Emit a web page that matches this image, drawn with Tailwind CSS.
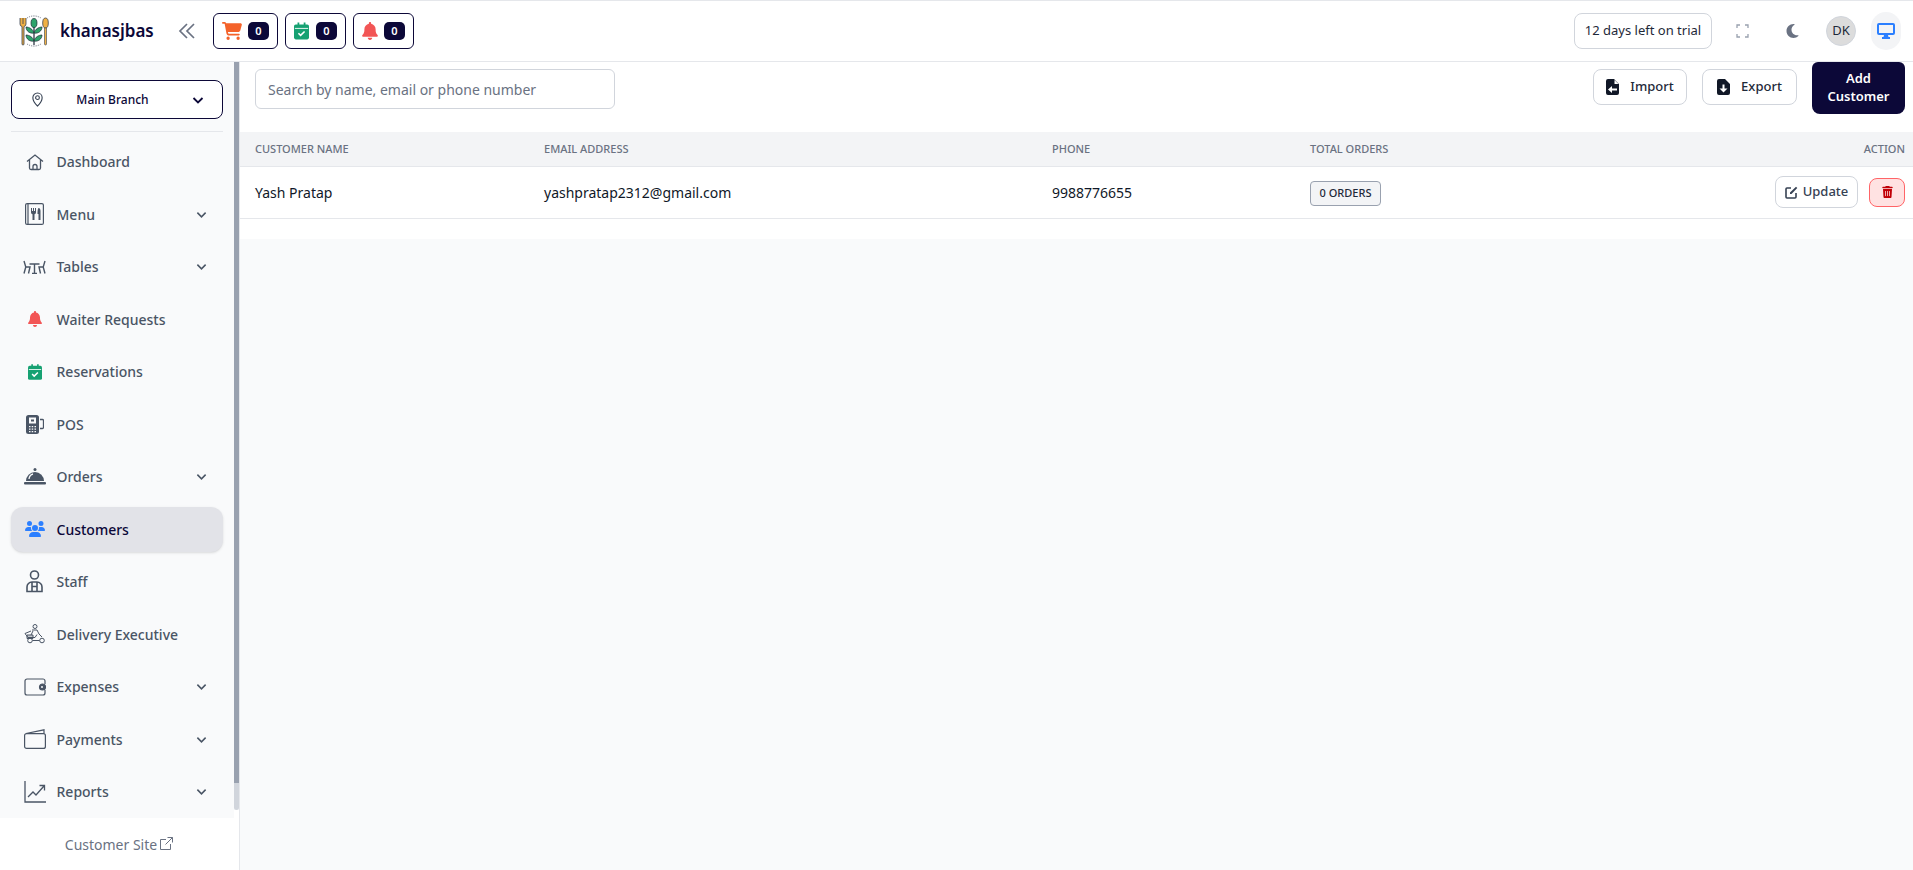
<!DOCTYPE html>
<html lang="en">
<head>
    <meta charset="UTF-8">
    <meta name="viewport" content="width=device-width, initial-scale=1.0">
    <title>Customers</title>
    <script src="https://cdn.jsdelivr.net/npm/@tailwindcss/browser@4"></script>
</head>
<body class="bg-white font-['Noto_Sans',sans-serif] text-gray-900 overflow-hidden">
<div class="h-[870px] flex flex-col">
    <!-- top bar -->
    <header class="h-[62px] shrink-0 bg-white border-t border-t-gray-200 border-b border-b-gray-200 flex items-center pl-[18px] pr-[12px]">
        <svg class="w-[32px] h-[32px] shrink-0" viewBox="0 0 32 32">
            <path d="M9 3a13 13 0 0 1 14 0M9 29a13 13 0 0 0 14 0" fill="none" stroke="#6b7280" stroke-width="0.9" stroke-dasharray="1.200 1"/>
            <path d="M2 3v6a2.500 2.500 0 0 0 2 2.500V29a1 1 0 0 0 2 0V11.500A2.500 2.500 0 0 0 8 9V3M5 3v6" fill="#f0b044" stroke="#374151" stroke-width="0.8"/>
            <ellipse cx="27.500" cy="8" rx="2.800" ry="5" fill="#f0b044" stroke="#374151" stroke-width="0.8"/>
            <path d="M26.500 13h2v16a1 1 0 0 1-2 0z" fill="#f0b044" stroke="#374151" stroke-width="0.6"/>
            <path d="M16 7v23" stroke="#1f2937" stroke-width="1.200"/>
            <ellipse cx="16" cy="8" rx="3" ry="4.500" fill="#2ea36b" stroke="#1f2937" stroke-width="0.7"/>
            <path d="M16 18c-1-4-5-6-8-6 0 4 4 7 8 6zM16 18c1-4 5-6 8-6 0 4-4 7-8 6zM16 26c-1-4-5-6-8-6 0 4 4 7 8 6zM16 26c1-4 5-6 8-6 0 4-4 7-8 6z" fill="#2ea36b" stroke="#1f2937" stroke-width="0.7"/>
        </svg>
        <span class="ml-[10px] text-[17px] font-semibold text-[#0c0838] w-[96px]">khanasjbas</span>
        <svg class="ml-[22px] w-[18px] h-[18px] text-gray-500" viewBox="0 0 18 18" fill="none" stroke="currentColor" stroke-width="1.700"><path d="M9 2 2 9l7 7M16 2 9 9l7 7"/></svg>
        <div class="ml-[17px] flex gap-[7px]">
            <div class="w-[65px] h-[36px] rounded-md border border-[#0c0838] flex items-center pl-[8px] gap-[6px]">
                <svg class="w-[20px] h-[18px] text-[#f4622a]" viewBox="0 0 576 512" fill="currentColor"><path d="M0 24C0 10.700 10.700 0 24 0h45.500c22 0 41.500 12.800 50.600 32h411c26.300 0 45.500 25 38.600 50.400l-41 152.300c-8.500 31.400-37 53.300-69.500 53.300H170.700l5.400 28.500c2.200 11.300 12.100 19.500 23.600 19.500H488c13.300 0 24 10.700 24 24s-10.700 24-24 24H199.700c-34.600 0-64.300-24.600-70.700-58.500L77.400 54.500c-.7-3.800-4-6.500-7.900-6.500H24C10.700 48 0 37.300 0 24zm128 440a48 48 0 1 1 96 0 48 48 0 1 1-96 0zm336-48a48 48 0 1 1 0 96 48 48 0 1 1 0-96z"/></svg>
                <span class="w-[21px] h-[18px] rounded-[5px] bg-[#0c0838] text-white text-[11px] font-semibold flex items-center justify-center">0</span>
            </div>
            <div class="w-[61px] h-[36px] rounded-md border border-[#0c0838] flex items-center pl-[8px] gap-[7px]">
                <svg class="w-[15px] h-[18px]" viewBox="0 0 17 19"><path d="M4 0h2v3H4zM11 0h2v3h-2z" fill="#16a172"/><rect y="2" width="17" height="17" rx="2" fill="#16a172"/><rect x="1" y="6" width="15" height="1" fill="#fff"/><path d="M5 12l2.500 2.500L12 10" fill="none" stroke="#fff" stroke-width="1.800"/></svg>
                <span class="w-[21px] h-[18px] rounded-[5px] bg-[#0c0838] text-white text-[11px] font-semibold flex items-center justify-center">0</span>
            </div>
            <div class="w-[61px] h-[36px] rounded-md border border-[#0c0838] flex items-center pl-[8px] gap-[6px]">
                <svg class="w-[16px] h-[18px] text-[#f25555]" viewBox="0 0 448 512" fill="currentColor"><path d="M224 0c-17.700 0-32 14.300-32 32v19.200C119 66 64 130.600 64 208v25.400c0 45.400-15.500 89.500-43.800 124.900L5.300 377c-5.800 7.200-6.900 17.100-2.900 25.400S14.800 416 24 416h400c9.200 0 17.600-5.300 21.600-13.600s2.900-18.200-2.900-25.400l-14.900-18.600c-28.300-35.500-43.800-79.600-43.800-125V208c0-77.400-55-142-128-156.800V32c0-17.700-14.300-32-32-32zm-64 448c0 35.300 28.700 64 64 64s64-28.700 64-64z"/></svg>
                <span class="w-[21px] h-[18px] rounded-[5px] bg-[#0c0838] text-white text-[11px] font-semibold flex items-center justify-center">0</span>
            </div>
        </div>
        <div class="ml-auto flex items-center">
            <div class="w-[138px] h-[36px] rounded-lg border border-gray-300 text-[13px] text-gray-800 flex items-center justify-center">12 days left on trial</div>
            <svg class="ml-[24px] w-[13px] h-[14px] text-gray-400" viewBox="0 0 13 14" fill="none" stroke="currentColor" stroke-width="1.300"><path d="M1 4V1h3M9 1h3v3M12 10v3H9M4 13H1v-3"/></svg>
            <svg class="ml-[36px] w-[15px] h-[16px] text-gray-500" viewBox="0 0 384 512" fill="currentColor"><path d="M223.500 32C100 32 0 132.300 0 256s100 224 223.500 224c60.600 0 115.500-24.200 155.800-63.400 5-4.900 6.300-12.500 3.100-18.700s-10.100-9.700-17-8.500c-9.800 1.700-19.800 2.600-30.100 2.600-96.900 0-175.500-78.800-175.500-176 0-65.800 36-123.100 89.300-153.300 6.100-3.500 9.200-10.500 7.700-17.300s-7.300-11.900-14.300-12.500c-6.300-.5-12.600-.8-19-.8z"/></svg>
            <div class="ml-[26px] w-[30px] h-[30px] rounded-full bg-[#dcdcdc] border border-gray-300 text-[13px] text-gray-800 flex items-center justify-center">DK</div>
            <div class="ml-[15px] w-[30px] h-[38px] rounded-full bg-gray-100 flex items-center justify-center">
                <svg class="w-[18px] h-[16px] text-blue-500" viewBox="0 0 18 16" fill="currentColor"><path d="M2 0h14a2 2 0 0 1 2 2v8a2 2 0 0 1-2 2H2a2 2 0 0 1-2-2V2a2 2 0 0 1 2-2zm0 2v8h14V2zM7 12h4l.5 2H13v2H5v-2h1.500z"/></svg>
            </div>
        </div>
    </header>

    <div class="flex-1 flex min-h-0">
        <!-- sidebar -->
        <aside class="w-[240px] shrink-0 border-r border-gray-200 flex flex-col bg-white">
            <div class="h-[756px] flex">
                <div class="w-[234px] bg-gray-50 px-[11px] pt-[18px]">
                    <button class="w-full h-[39px] rounded-lg border border-[#0c0838] bg-white flex items-center pl-[19px] pr-[18px]">
                        <svg class="w-[13px] h-[15px] text-gray-700" viewBox="0 0 14 16" fill="none" stroke="currentColor" stroke-width="1.200"><path d="M7 15S2 10 2 6a5 5 0 0 1 10 0c0 4-5 9-5 9z"/><circle cx="7" cy="6" r="2"/></svg>
                        <span class="flex-1 text-[12px] font-medium text-[#0c0838] pr-[11px]">Main Branch</span>
                        <svg class="w-[12px] h-[12px] text-[#0c0838]" viewBox="0 0 12 12" fill="none" stroke="currentColor" stroke-width="1.800"><path d="M1.500 4 6 8.500 10.500 4"/></svg>
                    </button>
                    <div class="mt-[12px] border-t border-gray-200"></div>
                    <nav class="mt-[7px] flex flex-col gap-[7.5px] text-[14px] font-medium text-gray-600">
                        <a class="h-[45px] flex items-center pl-[11px] pr-[16px]">
                            <span class="w-[25px] h-[25px] flex items-center justify-center"><svg class="w-[18px] h-[18px]" viewBox="0 0 18 18" fill="none" stroke="currentColor" stroke-width="1.300"><path d="M1 8.500 9 2l8 6.500M3.500 7v8a1.500 1.500 0 0 0 1.500 1.500h8a1.500 1.500 0 0 0 1.500-1.500V7M7 16.500v-3a2 2 0 0 1 4 0v3"/></svg></span>
                            <span class="ml-[9.5px]">Dashboard</span>
                        </a>
                        <a class="h-[45px] flex items-center pl-[11px] pr-[16px]">
                            <span class="w-[25px] h-[25px] flex items-center justify-center"><svg class="w-[19px] h-[22px]" viewBox="0 0 19 22"><rect x=".6" y=".6" width="17.800" height="20.800" rx="1.500" fill="none" stroke="currentColor" stroke-width="1.200"/><path d="M3 1v20" stroke="currentColor" stroke-width="1.200"/><path d="M6 5h1v3h1V5h1v3h1V5h1v4.500a2 2 0 0 1-1.500 1.800V17h-2v-5.700A2 2 0 0 1 6 9.500zM13.500 5c1.500 0 2 1.500 2 3v9h-2v-6h-1c0-2 0-5 1-6z" fill="currentColor"/></svg></span>
                            <span class="ml-[9.5px]">Menu</span>
                            <svg class="ml-auto w-[11px] h-[11px]" viewBox="0 0 12 12" fill="none" stroke="currentColor" stroke-width="1.700"><path d="M1.500 4 6 8.500 10.500 4"/></svg>
                        </a>
                        <a class="h-[45px] flex items-center pl-[11px] pr-[16px]">
                            <span class="w-[25px] h-[25px] flex items-center justify-center"><svg class="w-[23px] h-[14px]" viewBox="0 0 23 14" fill="none" stroke="currentColor" stroke-width="1.400"><path d="M1 1l1.800 6L1 13.500M2.800 7H7L5.500 13.500M22 1l-1.800 6 1.800 6.500M20.200 7H16l1.500 6.500M6.500 4h10M11.500 4v9.500M9 13.500h5"/></svg></span>
                            <span class="ml-[9.5px]">Tables</span>
                            <svg class="ml-auto w-[11px] h-[11px]" viewBox="0 0 12 12" fill="none" stroke="currentColor" stroke-width="1.700"><path d="M1.500 4 6 8.500 10.500 4"/></svg>
                        </a>
                        <a class="h-[45px] flex items-center pl-[11px] pr-[16px]">
                            <span class="w-[25px] h-[25px] flex items-center justify-center"><svg class="w-[14px] h-[16px] text-[#f25555]" viewBox="0 0 448 512" fill="currentColor"><path d="M224 0c-17.700 0-32 14.300-32 32v19.200C119 66 64 130.600 64 208v25.400c0 45.400-15.500 89.500-43.800 124.900L5.300 377c-5.800 7.200-6.900 17.100-2.900 25.400S14.800 416 24 416h400c9.200 0 17.600-5.300 21.600-13.600s2.900-18.200-2.900-25.400l-14.900-18.600c-28.300-35.500-43.800-79.600-43.800-125V208c0-77.400-55-142-128-156.800V32c0-17.700-14.300-32-32-32zm-64 448c0 35.300 28.700 64 64 64s64-28.700 64-64z"/></svg></span>
                            <span class="ml-[9.5px]">Waiter Requests</span>
                        </a>
                        <a class="h-[45px] flex items-center pl-[11px] pr-[16px]">
                            <span class="w-[25px] h-[25px] flex items-center justify-center"><svg class="w-[14px] h-[16px]" viewBox="0 0 17 19"><path d="M4 0h2v3H4zM11 0h2v3h-2z" fill="#16a172"/><rect y="2" width="17" height="17" rx="2" fill="#16a172"/><rect x="1" y="6" width="15" height="1" fill="#fff"/><path d="M5 12l2.500 2.500L12 10" fill="none" stroke="#fff" stroke-width="1.800"/></svg></span>
                            <span class="ml-[9.5px]">Reservations</span>
                        </a>
                        <a class="h-[45px] flex items-center pl-[11px] pr-[16px]">
                            <span class="w-[25px] h-[25px] flex items-center justify-center"><svg class="w-[18px] h-[19px]" viewBox="0 0 18 19"><rect width="13" height="19" rx="2.500" fill="currentColor"/><rect x="3" y="2.500" width="7" height="6" fill="#f9fafb"/><rect x="5" y="4.500" width="3" height="2" fill="currentColor"/><path d="M3 11h1.500v1.300H3zM5.700 11h1.500v1.300H5.700zM8.500 11H10v1.300H8.500zM3 13.500h1.500v1.300H3zM5.700 13.500h1.500v1.300H5.700zM8.500 13.500H10v1.300H8.500zM3 16h1.500v1.300H3zM5.700 16h1.500v1.300H5.700zM8.500 16H10v1.300H8.500z" fill="#f9fafb"/><path d="M14 4.500h2.500a1 1 0 0 1 1 1v7a1 1 0 0 1-1 1H14" fill="none" stroke="currentColor" stroke-width="1.300"/></svg></span>
                            <span class="ml-[9.5px]">POS</span>
                        </a>
                        <a class="h-[45px] flex items-center pl-[11px] pr-[16px]">
                            <span class="w-[25px] h-[25px] flex items-center justify-center"><svg class="w-[22px] h-[17px]" viewBox="0 0 22 17"><circle cx="11" cy="1.500" r="1.500" fill="currentColor"/><path d="M2 13a9 9 0 0 1 18 0z" fill="currentColor"/><path d="M5 11c.3-2.500 2-4.500 4-5" fill="none" stroke="#f9fafb" stroke-width="1.300"/><rect y="14" width="22" height="2.500" rx="1" fill="currentColor"/></svg></span>
                            <span class="ml-[9.5px]">Orders</span>
                            <svg class="ml-auto w-[11px] h-[11px]" viewBox="0 0 12 12" fill="none" stroke="currentColor" stroke-width="1.700"><path d="M1.500 4 6 8.500 10.500 4"/></svg>
                        </a>
                        <a class="h-[45px] flex items-center pl-[11px] pr-[16px] rounded-xl bg-[#e2e3e8] shadow-sm text-[#0c0838]">
                            <span class="w-[25px] h-[25px] flex items-center justify-center"><svg class="w-[20px] h-[16px] text-blue-500" viewBox="0 0 640 512" fill="currentColor"><path d="M144 0a80 80 0 1 1 0 160 80 80 0 1 1 0-160zm368 0a80 80 0 1 1 0 160 80 80 0 1 1 0-160zM0 298.700C0 239.800 47.800 192 106.700 192h42.700c15.900 0 31 3.500 44.600 9.700-1.300 7.200-1.900 14.700-1.900 22.300 0 38.200 16.800 72.500 43.300 96H21.300C9.600 320 0 310.400 0 298.700zM405.300 320h-.7c26.600-23.500 43.300-57.800 43.300-96 0-7.600-.7-15-1.900-22.300 13.600-6.300 28.700-9.700 44.600-9.700h42.700C592.200 192 640 239.800 640 298.700c0 11.800-9.600 21.300-21.300 21.300zM224 224a96 96 0 1 1 192 0 96 96 0 1 1-192 0zM128 485.300C128 411.700 187.700 352 261.300 352h117.300C452.300 352 512 411.700 512 485.300c0 14.700-11.900 26.700-26.700 26.700H154.700c-14.700 0-26.700-11.900-26.700-26.700z"/></svg></span>
                            <span class="ml-[9.5px]">Customers</span>
                        </a>
                        <a class="h-[45px] flex items-center pl-[11px] pr-[16px]">
                            <span class="w-[25px] h-[25px] flex items-center justify-center"><svg class="w-[17px] h-[23px]" viewBox="0 0 17 23" fill="none" stroke="currentColor" stroke-width="1.600"><circle cx="8.500" cy="5" r="4"/><path d="M1 21.500V17a5 5 0 0 1 5-5h5a5 5 0 0 1 5 5v4.500zM6 12v9.500M11 12v9.500M6 16.500h5"/></svg></span>
                            <span class="ml-[9.5px]">Staff</span>
                        </a>
                        <a class="h-[45px] flex items-center pl-[11px] pr-[16px]">
                            <span class="w-[25px] h-[25px] flex items-center justify-center"><svg class="w-[22px] h-[20px]" viewBox="0 0 22 20" fill="none" stroke="currentColor" stroke-width="1"><circle cx="11" cy="2.500" r="2"/><path d="M8 6h5l2 4 3 3M7 7 1 9.500l3 4h7l2-3M9 7l-2 4"/><path d="M3 11h6v3.500H3z" fill="currentColor" fill-opacity=".3"/><circle cx="6" cy="16.500" r="2.300"/><circle cx="18" cy="16.500" r="2.300"/><path d="M8.500 16.500h7"/></svg></span>
                            <span class="ml-[9.5px]">Delivery Executive</span>
                        </a>
                        <a class="h-[45px] flex items-center pl-[11px] pr-[16px]">
                            <span class="w-[25px] h-[25px] flex items-center justify-center"><svg class="w-[22px] h-[18px]" viewBox="0 0 22 18" fill="none" stroke="currentColor" stroke-width="1.200"><path d="M21 6V3a2 2 0 0 0-2-2H3a2 2 0 0 0-2 2v12a2 2 0 0 0 2 2h16a2 2 0 0 0 2-2v-3"/><rect x="15.500" y="6" width="6" height="6" rx="3" fill="currentColor"/><circle cx="18" cy="9" r="1" fill="#f9fafb" stroke="none"/></svg></span>
                            <span class="ml-[9.5px]">Expenses</span>
                            <svg class="ml-auto w-[11px] h-[11px]" viewBox="0 0 12 12" fill="none" stroke="currentColor" stroke-width="1.700"><path d="M1.500 4 6 8.500 10.500 4"/></svg>
                        </a>
                        <a class="h-[45px] flex items-center pl-[11px] pr-[16px]">
                            <span class="w-[25px] h-[25px] flex items-center justify-center"><svg class="w-[22px] h-[20px]" viewBox="0 0 22 20" fill="none" stroke="currentColor" stroke-width="1.200"><rect x=".6" y="4.600" width="20.800" height="14.800" rx="2"/><path d="M2 4.500 20 .8v3.700"/></svg></span>
                            <span class="ml-[9.5px]">Payments</span>
                            <svg class="ml-auto w-[11px] h-[11px]" viewBox="0 0 12 12" fill="none" stroke="currentColor" stroke-width="1.700"><path d="M1.500 4 6 8.500 10.500 4"/></svg>
                        </a>
                        <a class="h-[45px] flex items-center pl-[11px] pr-[16px]">
                            <span class="w-[25px] h-[25px] flex items-center justify-center"><svg class="w-[22px] h-[22px]" viewBox="0 0 22 22" fill="none" stroke="currentColor" stroke-width="1.300"><path d="M1 0v21h21"/><path d="M4 16l5-5 3 3 8-9M15.500 4.500H20.500V9.500"/></svg></span>
                            <span class="ml-[9.5px]">Reports</span>
                            <svg class="ml-auto w-[11px] h-[11px]" viewBox="0 0 12 12" fill="none" stroke="currentColor" stroke-width="1.700"><path d="M1.500 4 6 8.500 10.500 4"/></svg>
                        </a>
                    </nav>
                </div>
                <!-- scrollbar -->
                <div class="w-[5px] bg-gray-50 flex flex-col h-[748px]">
                    <div class="h-[721px] bg-gray-400"></div>
                    <div class="flex-1 bg-gray-300 rounded-b"></div>
                </div>
            </div>
            <div class="flex-1 flex items-center justify-center gap-[3px] text-[14px] text-gray-500 pt-[1px] pr-[1px]">
                <span>Customer Site</span>
                <svg class="w-[13px] h-[13px] mb-[3px]" viewBox="0 0 13 13" fill="none" stroke="currentColor"><path d="M10.500 7v5.500H.5v-10H6M7.500.5h5v5M12.500.5 5.500 7.500"/></svg>
            </div>
        </aside>

        <!-- main -->
        <main class="flex-1 min-w-0 bg-gray-50">
            <div class="bg-white">
                <div class="h-[70px] flex items-start pl-[15px] pr-[8px]">
                    <div class="mt-[7px] w-[360px] h-[40px] rounded-md border border-gray-300 bg-white flex items-center pl-[12px] text-[14px] text-gray-500">Search by name, email or phone number</div>
                    <div class="ml-auto mt-[7px] flex items-start">
                        <button class="w-[94px] h-[36px] rounded-lg border border-gray-300 bg-white text-[13px] font-medium text-gray-800 flex items-center justify-center gap-[11px]">
                            <svg class="w-[13px] h-[16px] text-[#111827]" viewBox="0 0 13 16" fill="currentColor"><path d="M2 0h6l5 5v9a2 2 0 0 1-2 2H2a2 2 0 0 1-2-2V2a2 2 0 0 1 2-2zm6.500 1v4h4zM6 7 2 10.500 6 14v-2.500h5v-2H6z" fill-rule="evenodd"/></svg>
                            Import
                        </button>
                        <button class="ml-[15px] w-[95px] h-[36px] rounded-lg border border-gray-300 bg-white text-[13px] font-medium text-gray-800 flex items-center justify-center gap-[11px]">
                            <svg class="w-[13px] h-[16px] text-[#111827]" viewBox="0 0 13 16" fill="currentColor"><path d="M2 0h6l5 5v9a2 2 0 0 1-2 2H2a2 2 0 0 1-2-2V2a2 2 0 0 1 2-2zm3.500 5.500v4H2.500l4 4 4-4h-3v-4z" fill-rule="evenodd"/></svg>
                            Export
                        </button>
                        <button class="ml-[15px] -mt-[7px] w-[93px] h-[52px] rounded-lg rounded-t-md bg-[#0c0838] text-white text-[13px] font-semibold leading-[18px] pb-[2px]">Add<br>Customer</button>
                    </div>
                </div>
                <table class="w-full border-collapse table-fixed">
                    <thead class="bg-gray-100">
                        <tr class="h-[34px] border-b border-gray-200 text-[11px] font-medium text-gray-500 uppercase text-left">
                            <th class="font-medium pl-[15px] w-[304px]">Customer Name</th>
                            <th class="font-medium w-[508px]">Email Address</th>
                            <th class="font-medium w-[258px]">Phone</th>
                            <th class="font-medium">Total Orders</th>
                            <th class="font-medium text-right pr-[8px]">Action</th>
                        </tr>
                    </thead>
                    <tbody>
                        <tr class="h-[52px] border-b border-gray-200 text-[14px]">
                            <td class="pl-[15px]">Yash Pratap</td>
                            <td>yashpratap2312@gmail.com</td>
                            <td>9988776655</td>
                            <td><span class="inline-flex items-center mt-[2px] h-[25px] w-[71px] justify-center rounded border border-gray-400 bg-gray-100 text-[11px] font-medium text-gray-800 uppercase">0 Orders</span></td>
                            <td class="pr-[8px]">
                                <div class="flex justify-end items-center gap-[11px]">
                                    <button class="w-[83px] h-[32px] rounded-lg border border-gray-300 text-[13px] text-gray-700 font-medium flex items-center justify-center gap-[5px]">
                                        <svg class="w-[13px] h-[13px]" viewBox="0 0 13 13" fill="none" stroke="currentColor" stroke-width="1.600"><path d="M6 2H2a1 1 0 0 0-1 1v8a1 1 0 0 0 1 1h8a1 1 0 0 0 1-1V7"/><path d="M5 8V6.500L11 .8l1.300 1.300L6.500 8z" fill="currentColor" stroke="none"/></svg>
                                        Update
                                    </button>
                                    <button class="w-[36px] h-[29px] rounded-lg border border-red-400 bg-red-100 flex items-center justify-center">
                                        <svg class="w-[11px] h-[12px] text-red-700" viewBox="0 0 448 512" fill="currentColor"><path d="M135.200 17.700 128 32H32C14.300 32 0 46.300 0 64s14.300 32 32 32h384c17.700 0 32-14.300 32-32s-14.300-32-32-32h-96l-7.200-14.300C307.400 6.800 296.300 0 284.200 0H163.800c-12.100 0-23.200 6.800-28.600 17.700zM416 128H32l21.200 339c1.600 25.300 22.600 45 47.900 45h245.800c25.300 0 46.300-19.700 47.900-45zM144 208c8.800 0 16 7.200 16 16v192c0 8.800-7.200 16-16 16s-16-7.200-16-16V224c0-8.800 7.200-16 16-16zm80 0c8.800 0 16 7.200 16 16v192c0 8.800-7.200 16-16 16s-16-7.200-16-16V224c0-8.800 7.200-16 16-16zm80 0c8.800 0 16 7.200 16 16v192c0 8.800-7.200 16-16 16s-16-7.200-16-16V224c0-8.800 7.200-16 16-16z"/></svg>
                                    </button>
                                </div>
                            </td>
                        </tr>
                    </tbody>
                </table>
                <div class="h-[20px]"></div>
            </div>
        </main>
    </div>
</div>
</body>
</html>
